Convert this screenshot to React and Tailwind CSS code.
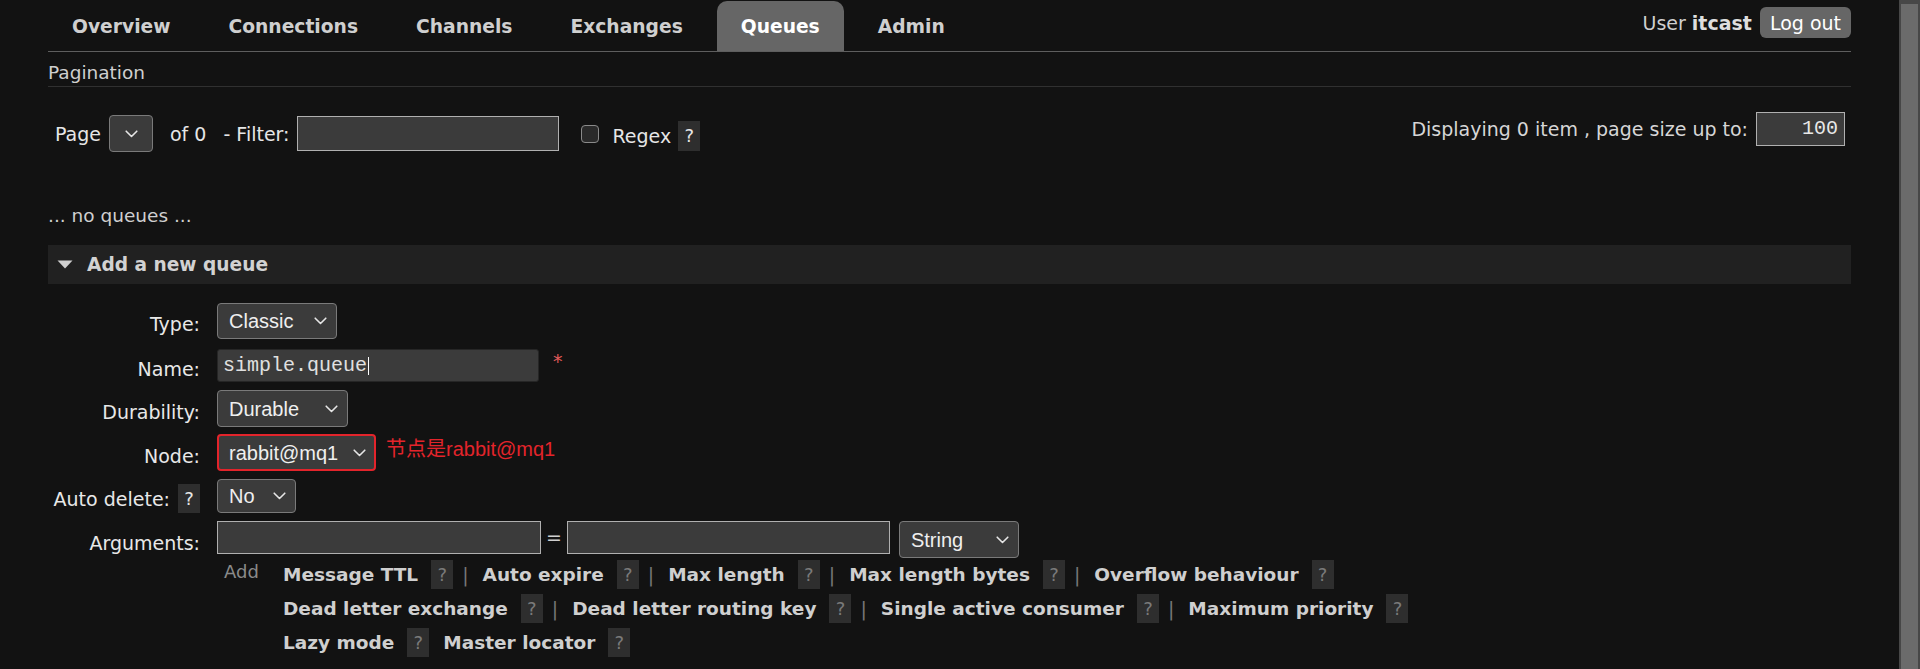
import React from "react";

const Chevron = () => (
  <svg width="13" height="8" viewBox="0 0 13 8" fill="none">
    <path d="M1.2 1.2L6.5 6.5L11.8 1.2" stroke="#e6e6e6" strokeWidth="1.6" strokeLinecap="round" strokeLinejoin="round" />
  </svg>
);

function Select({ label, className = "" }) {
  return (
    <div
      className={`flex items-center justify-between rounded-[4px] border border-[#7a7a7a] bg-[#3b3b3b] pl-[11px] pr-[9px] text-[20px] leading-none text-[#efefef] font-['Liberation_Sans',sans-serif] ${className}`}
    >
      <span>{label}</span>
      <Chevron />
    </div>
  );
}

function Help({ light = false, className = "" }) {
  return (
    <span
      className={`flex h-[29px] w-[22px] items-center justify-center bg-[#2e2e2e] text-[18px] ${light ? "text-[#e6e6e6]" : "text-[#7a7a7a]"} ${className}`}
    >
      ?
    </span>
  );
}

function Arg({ label, sep = true }) {
  return (
    <div className="flex items-center">
      <span className="text-[18.5px] font-bold text-[#cfcfcf]">{label}</span>
      <Help className="ml-[13px]" />
      {sep && <span className="ml-[9px] mr-[14px] text-[#777]">|</span>}
      {!sep && <span className="w-[14px]" />}
    </div>
  );
}

function Row({ label, children, className = "", help = false }) {
  return (
    <div className={`flex items-center ${className}`}>
      <div className="mt-[6px] flex w-[152px] items-center justify-end text-[#e8e8e8]">
        {label}
        {help && <Help light className="ml-[8px] -mt-[1px] h-[28px]" />}
      </div>
      <div className="ml-[17px] flex items-center">{children}</div>
    </div>
  );
}

export default function App() {
  const tabs = ["Overview", "Connections", "Channels", "Exchanges", "Queues", "Admin"];
  return (
    <div className="flex h-[669px] w-full overflow-hidden bg-[#121212] font-['DejaVu_Sans',sans-serif] text-[19px] leading-[22px] text-[#cfcfcf]">
      <div className="flex-1 px-[48px]">
        {/* header */}
        <div className="flex justify-between border-b border-[#5e5e5e]">
          <ul className="flex gap-[10px] pt-[1px]">
            {tabs.map((t) => (
              <li
                key={t}
                className={`flex h-[50px] items-center px-[24px] pt-[1px] text-[18.7px] font-bold ${
                  t === "Queues" ? "rounded-t-[10px] bg-[#666] text-white" : "text-[#cfcfcf]"
                }`}
              >
                {t}
              </li>
            ))}
          </ul>
          <div className="mt-[7px] flex h-[31px] items-center self-start">
            <span className="text-[#cfcfcf]">User</span>
            <span className="ml-[6px] font-bold text-[#dedede]">itcast</span>
            <span className="ml-[8px] flex h-[31px] items-center rounded-[6px] bg-[#666] px-[10px] text-white">Log out</span>
          </div>
        </div>

        {/* pagination */}
        <div className="border-b border-[#303030] pt-[10px] pb-[2px] text-[18.5px] text-[#cfcfcf]">Pagination</div>

        <div className="flex items-start justify-between pt-[25px]">
          <div className="mt-[3px] flex items-center pl-[7px] text-[#e6e6e6]">
            <span>Page</span>
            <div className="ml-[8px] flex h-[37px] w-[44px] items-center justify-center rounded-[4px] border border-[#7a7a7a] bg-[#3b3b3b]">
              <Chevron />
            </div>
            <span className="ml-[17px]">of 0</span>
            <span className="ml-[17px]">- Filter:</span>
            <div className="ml-[8px] h-[35px] w-[262px] border border-[#b0b0b0] bg-[#3b3b3b]" />
            <span className="ml-[22px] mt-[1px] h-[18px] w-[18px] rounded-[4px] border border-[#8a8a8a] bg-[#2a2a2a]" />
            <span className="ml-[13px] mt-[4px]">Regex</span>
            <Help light className="ml-[7px] mt-[5px] h-[30px]" />
          </div>
          <div className="flex items-center pr-[6px]">
            <span className="text-[#d6d6d6]">Displaying 0 item , page size up to:</span>
            <div className="ml-[8px] flex h-[34px] w-[89px] items-center justify-end border border-[#b0b0b0] bg-[#3b3b3b] pr-[6px] font-['Liberation_Mono',monospace] text-[20px] text-[#e8e8e8]">
              100
            </div>
          </div>
        </div>

        <div className="mt-[53px] text-[18.5px] text-[#cfcfcf]">... no queues ...</div>

        {/* add a new queue */}
        <div className="mt-[18px] flex h-[39px] items-center bg-[#212121] pl-[9px]">
          <svg width="16" height="9" viewBox="0 0 16 9">
            <path d="M0.5 0.5H15.5L8 8.5Z" fill="#cfcfcf" />
          </svg>
          <span className="ml-[14px] text-[18.6px] font-bold text-[#d2d2d2]">Add a new queue</span>
        </div>

        <div className="mt-[19px] flex flex-col">
          <Row label="Type:">
            <Select label="Classic" className="h-[36px] w-[120px]" />
          </Row>
          <Row label="Name:" className="mt-[10px]">
            <div className="flex h-[33px] w-[322px] items-center rounded-[3px] border border-[#262626] bg-[#3b3b3b] pl-[5px] font-['Liberation_Mono',monospace] text-[20px] text-[#e0e0e0]">
              simple.queue
              <span className="ml-[1px] h-[18px] w-[1px] bg-white" />
            </div>
            <span className="ml-[14px] -mt-[10px] text-[#e05a5a]">*</span>
          </Row>
          <Row label="Durability:" className="mt-[8px]">
            <Select label="Durable" className="h-[37px] w-[131px]" />
          </Row>
          <Row label="Node:" className="mt-[7px]">
            <Select label="rabbit@mq1" className="h-[37px] w-[159px] !border-2 !border-[#e3242b] !pl-[10px] !pr-[8px]" />
            <span className="ml-[10px] -mt-[8px] font-['Liberation_Sans','Noto_Sans_CJK_SC',sans-serif] text-[20px] text-[#e3242b]">
              节点是rabbit@mq1
            </span>
          </Row>
          <Row label="Auto delete:" help className="mt-[8px]">
            <Select label="No" className="h-[34px] w-[79px]" />
          </Row>
          <Row label="Arguments:" className="mt-[8px]">
            <div className="flex items-start">
              <div className="h-[33px] w-[324px] border border-[#b0b0b0] bg-[#3b3b3b]" />
              <span className="mx-[5px] mt-[5px] text-[#d0d0d0]">=</span>
              <div className="h-[33px] w-[323px] border border-[#b0b0b0] bg-[#3b3b3b]" />
              <Select label="String" className="ml-[9px] h-[37px] w-[120px]" />
            </div>
          </Row>

          <div className="mt-[2px] flex pl-[176px]">
            <span className="w-[59px] pt-[1px] text-[18px] text-[#8a8a8a]">Add</span>
            <div className="flex flex-col gap-[5px]">
              <div className="flex">
                <Arg label="Message TTL" />
                <Arg label="Auto expire" />
                <Arg label="Max length" />
                <Arg label="Max length bytes" />
                <Arg label="Overflow behaviour" sep={false} />
              </div>
              <div className="flex">
                <Arg label="Dead letter exchange" />
                <Arg label="Dead letter routing key" />
                <Arg label="Single active consumer" />
                <Arg label="Maximum priority" sep={false} />
              </div>
              <div className="flex">
                <Arg label="Lazy mode" sep={false} />
                <Arg label="Master locator" sep={false} />
              </div>
            </div>
          </div>
        </div>
      </div>

      {/* scrollbar */}
      <div className="flex w-[21px] flex-col bg-[#474747] px-[2px] pt-[4px]">
        <div className="flex-1 bg-[#6b6b6b]" />
      </div>
    </div>
  );
}
